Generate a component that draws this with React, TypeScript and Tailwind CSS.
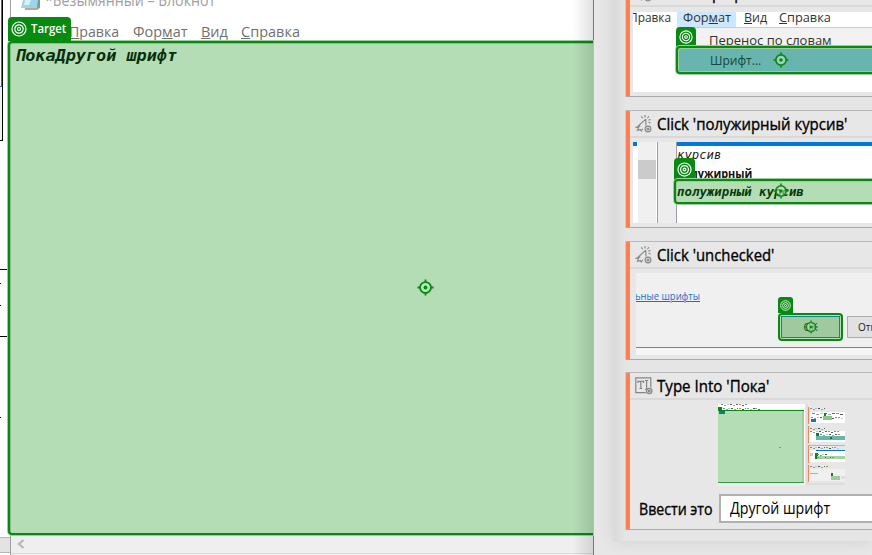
import { useLayoutEffect, useRef, useState, type ReactNode } from "react";

/** Single line of text squeezed or stretched to the width of its box. */
function Fit({ className, children }: { className: string; children: ReactNode }) {
  const box = useRef<HTMLSpanElement>(null);
  const inner = useRef<HTMLSpanElement>(null);
  const [scale, setScale] = useState(1);
  useLayoutEffect(() => {
    if (box.current && inner.current) {
      setScale(box.current.clientWidth / inner.current.offsetWidth);
    }
  }, []);
  return (
    <span ref={box} className={`block shrink-0 whitespace-pre ${className}`}>
      <span ref={inner} className="inline-block origin-left" style={{ transform: `scaleX(${scale})` }}>
        {children}
      </span>
    </span>
  );
}

function Rings({ className }: { className: string }) {
  return (
    <svg viewBox="0 0 16 16" className={className} fill="none" stroke="#fff" strokeWidth="1.2">
      <circle cx="8" cy="8" r="7" />
      <circle cx="8" cy="8" r="4.2" />
      <circle cx="8" cy="8" r="1.5" />
    </svg>
  );
}

function Crosshair({ className }: { className: string }) {
  return (
    <svg viewBox="0 0 18 18" className={className} fill="none" stroke="#078a10" strokeWidth="1.9">
      <circle cx="9" cy="9" r="5.8" fill="#c3e6c5" fillOpacity=".6" />
      <path d="M9 .5v3M9 14.5v3M.5 9h3M14.5 9h3" />
      <circle cx="9" cy="9" r="2" fill="#078a10" stroke="none" />
    </svg>
  );
}

function ClickIcon() {
  return (
    <svg viewBox="0 0 18 18" className="h-[18px] w-[18px] shrink-0" fill="none" stroke="#858585" strokeWidth="1.1">
      <path d="M10.8 4.2 3.6 10.7l1.7.3-3.9 1.2 2.2.5-1.2 2.6 3.1-.7.8 1.3 1.5-2.1M10.8 4.2l.1 6.2" />
      <path d="M10 0v2.4M6.4 1.3l1.2 1.9M13.8 1.3l-1.3 1.9M15.6 4.5l-2.3.7M15.5 7.9l-2-.7" />
      <circle cx="13" cy="14" r="2.9" />
      <circle cx="13" cy="14" r="1" />
    </svg>
  );
}

function TypeIcon() {
  return (
    <svg viewBox="0 0 18 18" className="h-[18px] w-[18px] shrink-0" fill="none" stroke="#858585" strokeWidth="1.2">
      <path d="M10.8 15.7H.8V.8h15v9.8" />
      <path d="M3 6V4.4h5.6V6M5.8 4.4v7M4.4 11.5h2.8M10 3.5h3.2M11.6 3.5v9M10 12.5h1.4" />
      <circle cx="14.2" cy="14" r="2.7" fill="#e7e7e7" />
      <circle cx="14.2" cy="14" r=".9" />
    </svg>
  );
}

function Card({ height, icon, title, width, children }: { height: string; icon: ReactNode; title: string; width: string; children: ReactNode }) {
  return (
    <section className={`flex shrink-0 flex-col border-y border-t-[#b8b8b8] border-b-[#a9a9a9] bg-[#e7e7e7] shadow-[inset_4px_0_0_#ff7f50,-1px_0_0_#f0bea9] ${height}`}>
      <header className="ml-[4px] flex h-[27px] shrink-0 items-center gap-[4px] border-b-2 border-[#d9d9d9] pl-[5px]">
        {icon}
        <Fit className={`text-[15.5px] leading-[20px] text-black [-webkit-text-stroke:0.35px_black] ${width}`}>{title}</Fit>
      </header>
      {children}
    </section>
  );
}

function Notepad() {
  return (
    <div className="absolute top-0 left-[10px] flex h-[555px] w-[583px] flex-col border-l border-[#a0a0a0] bg-white">
      <div className="flex h-[22px] shrink-0 pl-[10px]">
        <svg viewBox="0 0 20 10" className="h-[10px] w-[20px]">
          <path d="M3 0h16v8l-3 2H4z" fill="#b9a892" />
          <path d="M2 0h15l-1 8H0z" fill="#9fd4e6" />
          <path d="M4 0h6L8 5H3z" fill="#d8f0f8" />
          <path d="M17 0h2v7l-3 2z" fill="#6d9caa" />
        </svg>
        <Fit className="mt-[-11px] ml-[4px] w-[170px] text-[15.5px] leading-[22px] text-[#a0a0a0]">*Безымянный – Блокнот</Fit>
      </div>
      <div className="flex h-[19px] shrink-0 pl-[58px] text-[15px] leading-[18px] text-[#707070]">
        <Fit className="w-[50px]"><u>П</u>равка</Fit>
        <Fit className="ml-[14px] w-[55px]">Фор<u>м</u>ат</Fit>
        <Fit className="ml-[13px] w-[27px]"><u>В</u>ид</Fit>
        <Fit className="ml-[13px] w-[59px]"><u>С</u>правка</Fit>
      </div>
      <div className="z-10 -ml-[3px] h-[494px] shrink-0 rounded-l-[4px] border-2 border-r-0 border-[#078a10] bg-[#b4ddb5] shadow-[0_0_0_1px_#9fcba0,inset_1px_1px_0_#8dbd8f]">
        <Fit className="mt-[3px] ml-[5px] w-[162px] font-['DejaVu_Sans_Mono',monospace] text-[16px] leading-[20px] font-bold text-[#072f0b] italic">ПокаДругой шрифт</Fit>
      </div>
      <div className="flex h-[19px] shrink-0 items-center border-b border-[#dadada] bg-[#efefef] pl-[6px]">
        <svg viewBox="0 0 8 10" className="h-[10px] w-[8px]" fill="none" stroke="#b8b8b8" strokeWidth="2.2">
          <path d="M6.5 1 2 5l4.5 4" />
        </svg>
      </div>
      <div className="flex-1 bg-[#f2f2f2]" />
      <div className="absolute top-[17px] left-[-3px] z-20 flex h-[24px] w-[63px] items-center rounded-t-[4px] bg-[#078a10] pl-[3px]">
        <Rings className="h-[16px] w-[16px]" />
        <Fit className="ml-[4px] w-[35px] font-['Open_Sans',sans-serif] text-[12px] leading-[20px] font-semibold text-white">Target</Fit>
      </div>
      <div className="absolute top-0 right-0 z-20 h-full w-[20px] bg-linear-to-r from-transparent to-black/12" />
      <Crosshair className="absolute top-[279px] left-[406px] z-20 h-[17px] w-[17px]" />
    </div>
  );
}

function MenuShot() {
  return (
    <div className="relative mt-[5px] ml-[7px] h-[80px] overflow-hidden bg-white text-[13px] text-[#333]">
      <div className="flex h-[15px] leading-[10px]">
        <Fit className="-ml-[4px] w-[42px]">Правка</Fit>
        <div className="ml-[6px] flex w-[59px] bg-[#cce8ff] pl-[6px]">
          <Fit className="w-[48px]">Фор<u>м</u>ат</Fit>
        </div>
        <Fit className="ml-[8px] w-[23px]"><u>В</u>ид</Fit>
        <Fit className="ml-[12px] w-[52px]"><u>С</u>правка</Fit>
      </div>
      <div className="ml-[44px] h-[46px] border-t border-[#ccc] bg-[#f2f2f2] pt-[3px] pl-[32px]">
        <Fit className="w-[123px] leading-[18px]">Перенос по словам</Fit>
      </div>
      <div className="absolute top-[15px] left-[43px] flex h-[20px] w-[20px] items-center justify-center rounded-t-[4px] bg-[#078a10]">
        <Rings className="h-[14px] w-[14px]" />
      </div>
      <div className="absolute top-[34px] left-[43px] flex h-[28px] w-[210px] items-center rounded-l-[4px] border-2 border-[#078a10] bg-[#68b5b0] pl-[32px] shadow-[0_0_0_1px_#9fcba0,inset_1px_1px_0_#9fcba0,inset_0_-1px_0_#9fcba0]">
        <Fit className="w-[51px] leading-[20px] text-[#12483d]">Шрифт...</Fit>
        <Crosshair className="ml-[12px] h-[16px] w-[16px]" />
      </div>
    </div>
  );
}

function FontStyleShot() {
  return (
    <div className="relative mt-[4px] ml-[7px] flex h-[81px] overflow-hidden bg-white">
      <div className="w-[4px] border-t-4 border-[#0078d7] bg-white" />
      <div className="ml-px w-[18px] bg-[#f0f0f0] pt-[18px]">
        <div className="h-[19px] bg-[#cbcbcb]" />
      </div>
      <div className="ml-px w-[20px] border-x border-[#9c9ca4] bg-[#ededed]" />
      <div className="flex-1 border-t-4 border-[#0078d7] font-['DejaVu_Sans_Mono',monospace] text-[12px]">
        <Fit className="w-[44px] leading-[18px] text-[#222] italic">курсив</Fit>
        <Fit className="w-[75px] font-['Open_Sans',sans-serif] leading-[20px] font-bold text-[#111]">полужирный</Fit>
      </div>
      <div className="absolute top-[16px] left-[41px] flex h-[22px] w-[21px] items-center justify-center rounded-t-[4px] bg-[#078a10]">
        <Rings className="h-[15px] w-[15px]" />
      </div>
      <div className="absolute top-[37px] left-[41px] h-[25px] w-[210px] rounded-l-[4px] border-2 border-[#078a10] bg-[#b4ddb5] shadow-[0_0_0_1px_#9fcba0,inset_1px_1px_0_#9fcba0]">
        <Fit className="ml-px w-[127px] font-['DejaVu_Sans_Mono',monospace] text-[12px] leading-[23px] font-bold text-[#073a0b] italic">полужирный курсив</Fit>
        <Crosshair className="absolute top-[2px] left-[97px] h-[16px] w-[16px] opacity-90" />
      </div>
    </div>
  );
}

function DialogShot() {
  return (
    <div className="relative mt-[4px] ml-[10px] flex h-[82px] flex-col overflow-hidden bg-[#f0f0f0]">
      <Fit className="mt-[16px] -ml-px w-[65px] text-[10px] leading-[14px] text-[#1b6fcb]"><u>ьные шрифты</u></Fit>
      <div className="absolute top-[24px] left-[142px] flex h-[16px] w-[15px] items-center justify-center rounded-t-[3px] bg-[#078a10]">
        <Rings className="h-[11px] w-[11px]" />
      </div>
      <div className="mt-[10px] ml-[142px] flex gap-[4px]">
        <div className="flex h-[28px] w-[65px] shrink-0 rounded-[4px] border-2 border-[#078a10] bg-[#b4ddb5] p-[1px]">
          <div className="flex flex-1 items-center justify-center border border-[#16838a] bg-[#a0c9a0]">
            <div className="relative flex">
              <span className="text-[10px] leading-[12px] text-[#174f1c]">OK</span>
              <Crosshair className="absolute top-[-1px] left-0 h-[14px] w-[14px] opacity-90" />
            </div>
          </div>
        </div>
        <div className="mt-[3px] h-[22px] w-[70px] shrink-0 border border-[#adadad] bg-[#e1e1e1] pl-[10px] text-[10px] leading-[20px] text-[#222]">Отмена</div>
      </div>
      <div className="mt-auto h-[8px] border-t border-[#808080] bg-[#f5f5f5]" />
    </div>
  );
}

const inks = ["#7a8aa0", "#555", "#c08a50", "#999", "#9aa", "#556", "#b9c4cc", "#666"];

function Specks({ x, y, n, step = 4 }: { x: number; y: number; n: number; step?: number }) {
  return (
    <>
      {Array.from({ length: n }, (_, i) => (
        <rect key={i} x={x + i * step} y={y + (i % 3 === 1 ? 0.5 : 0)} width={step * 0.7} height="1.4" fill={inks[(i * 3) % 8]} />
      ))}
    </>
  );
}

function Thumbnail() {
  return (
    <svg viewBox="0 0 130 82" className="h-[82px] w-[130px]" shapeRendering="crispEdges">
      <rect x="1" width="87" height="81" fill="#fff" />
      <rect x="1" y="6" width="86" height="73" fill="#b4ddb5" />
      <rect x="1" y="1" width="86" height="5" fill="#fff" />
      <rect x="1" y="6" width="86" height="1" fill="#078a10" />
      <rect x="1" y="78" width="86" height="1" fill="#35a040" />
      <rect x="1" y="79" width="86" height="3" fill="#eee" />
      <rect x="85" y="7" width="2" height="71" fill="#a5cba6" />
      <rect x="1" y="3" width="4" height="3" fill="#078a10" />
      <rect x="2" y="7" width="6" height="3" fill="#087d83" />
      <Specks x={4} y={0} n={9} step={3} />
      <Specks x={6} y={4} n={14} step={2.7} />
      <rect x="62" y="43" width="2" height="1" fill="#56b35e" />
      <rect x="89" width="39" height="81" fill="#ddd" />
      <rect x="91" width="37" height="79" fill="#e7e7e7" />
      <rect x="91" y="3" width="1" height="17" fill="#ff7f50" />
      <rect x="93" y="8" width="35" height="11" fill="#fff" />
      <Specks x={93} y={4} n={6} step={2.7} />
      <Specks x={95} y={9} n={8} />
      <Specks x={94} y={13} n={11} step={3} />
      <rect x="94" y="15" width="5" height="3" fill="#0078d7" />
      <rect x="107" y="9" width="2" height="3" fill="#078a10" />
      <rect x="106" y="12" width="9" height="4" fill="#86c989" />
      <rect x="91" y="22" width="1" height="17" fill="#ff7f50" />
      <rect x="92" y="27" width="36" height="11" fill="#fff" />
      <Specks x={93} y={24} n={6} step={2.7} />
      <Specks x={93} y={27} n={10} step={3} />
      <rect x="99" y="29" width="3" height="4" fill="#078a10" />
      <Specks x={103} y={30} n={7} step={3} />
      <rect x="99" y="32" width="29" height="4" fill="#68b5b0" />
      <rect x="113" y="33" width="2" height="2" fill="#078a10" />
      <rect x="91" y="41" width="37" height="1" fill="#b5b5b5" />
      <rect x="91" y="42" width="1" height="17" fill="#ff7f50" />
      <rect x="92" y="46" width="36" height="12" fill="#fff" />
      <Specks x={93} y={43} n={11} step={2.7} />
      <rect x="99" y="46" width="29" height="1" fill="#0078d7" />
      <rect x="93" y="49" width="3" height="3" fill="#cbcbcb" />
      <rect x="98" y="49" width="3" height="6" fill="#078a10" />
      <rect x="100" y="52" width="28" height="3" fill="#a3d3a5" />
      <Specks x={100} y={50} n={4} step={2.7} />
      <Specks x={100} y={53} n={7} step={2.5} />
      <rect x="91" y="61" width="1" height="17" fill="#ff7f50" />
      <rect x="92" y="65" width="36" height="12" fill="#f0f0f0" />
      <Specks x={93} y={62} n={7} step={2.7} />
      <rect x="93" y="69" width="8" height="1" fill="#8cb4dd" />
      <rect x="114" y="69" width="2" height="3" fill="#078a10" />
      <rect x="114" y="72" width="9" height="4" fill="#9bca9d" />
      <rect x="124" y="72" width="4" height="3" fill="#ddd" />
    </svg>
  );
}

export default function App() {
  return (
    <main className="relative h-[555px] w-[872px] overflow-hidden bg-white font-['Open_Sans','Noto_Sans',sans-serif]">
      <div className="flex h-[141px] w-[3px] flex-col border-r border-b border-black bg-[#f0f0f0]">
        <div className="h-[87px] border-r border-b border-[#267abf] bg-white" />
      </div>
      <span className="absolute top-[166px] left-[-10px] text-[14px] leading-[20px] text-black">ы</span>
      <div className="absolute top-[269px] left-0 h-[68px] w-[10px] border-y border-black" />
      <div className="absolute top-[283px] left-0 h-px w-px bg-black" />
      <div className="absolute top-[305px] left-0 h-px w-px bg-black" />
      <div className="absolute top-[417px] left-0 h-px w-px bg-black" />
      <div className="absolute top-[537px] left-0 h-[16px] w-[10px] border-y border-[#b5b5b5] bg-[#e3e3e3]" />
      <Notepad />
      <div className="absolute top-0 left-[593px] h-[555px] w-[279px] overflow-hidden border-l border-[#7b7b7b] bg-[#e7e7e7]">
        <div className="-mt-[21px] ml-[19px] flex h-[562px] flex-col bg-[#e5e5e5] bg-linear-to-r from-[#d9d9d9] to-[#e5e5e5] to-5% pl-[13px] shadow-[0_0_16px_rgba(0,0,0,.1)]">
          <Card height="h-[118px]" icon={<ClickIcon />} title="Click 'Шрифт...'" width="w-[107px]"><MenuShot /></Card>
          <div className="h-[13px] shrink-0" />
          <Card height="h-[118px]" icon={<ClickIcon />} title="Click 'полужирный курсив'" width="w-[190px]"><FontStyleShot /></Card>
          <div className="h-[13px] shrink-0" />
          <Card height="h-[119px]" icon={<ClickIcon />} title="Click 'unchecked'" width="w-[117px]"><DialogShot /></Card>
          <div className="h-[12px] shrink-0" />
          <Card height="h-[158px]" icon={<TypeIcon />} title="Type Into 'Пока'" width="w-[112px]">
            <div className="mt-[4px] ml-[91px] h-[90px]"><Thumbnail /></div>
            <div className="flex h-[29px] shrink-0 items-center pl-[13px] text-[15.5px] leading-[20px] text-black">
              <Fit className="w-[74px] [-webkit-text-stroke:0.35px_black]">Ввести это</Fit>
              <div className="ml-[6px] flex h-[29px] flex-1 items-center border-2 border-r-0 border-[#b0b0b0] bg-white pb-[2px] pl-[9px]">
                <Fit className="w-[100px]">Другой шрифт</Fit>
              </div>
            </div>
          </Card>
        </div>
      </div>
    </main>
  );
}
